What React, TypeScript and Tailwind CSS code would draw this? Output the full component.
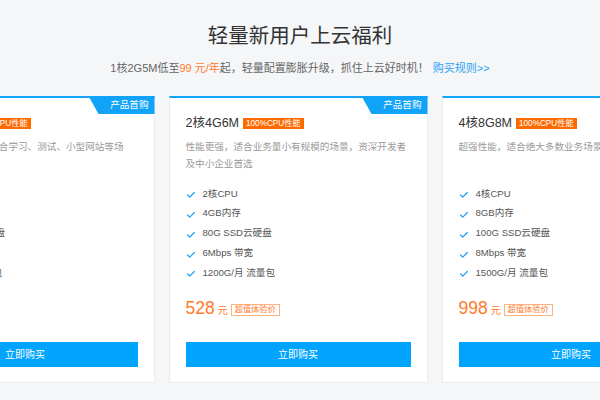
import { Check } from "lucide-react";

const plans = [
  {
    name: "1核2G5M",
    desc: "入门级性能配置，适合学习、测试、小型网站等场景，个人开发者首选",
    features: ["1核CPU", "2GB内存", "40GB SSD云硬盘", "5Mbps 带宽", "1000G/月 流量包"],
    price: "99",
  },
  {
    name: "2核4G6M",
    desc: "性能更强，适合业务量小有规模的场景，资深开发者及中小企业首选",
    features: ["2核CPU", "4GB内存", "80G SSD云硬盘", "6Mbps 带宽", "1200G/月 流量包"],
    price: "528",
  },
  {
    name: "4核8G8M",
    desc: "超强性能，适合绝大多数业务场景，中大型企业首选",
    features: ["4核CPU", "8GB内存", "100G SSD云硬盘", "8Mbps 带宽", "1500G/月 流量包"],
    price: "998",
  },
];

function PlanCard({ plan }: { plan: (typeof plans)[number] }) {
  return (
    <div className="relative w-[259px] shrink-0 bg-white border border-[#e9ebee] border-t-2 border-t-[#11a3f7] px-[16px] pt-[16px] pb-[15px]">
      {/* corner tag */}
      <div className="absolute -top-[2px] -right-px w-[66px] h-[18px] bg-[#11a3f7] [clip-path:polygon(0_0,100%_0,100%_100%,10px_100%)] flex items-center justify-end pr-[6px]">
        <span className="text-[9.6px] leading-none text-white">产品首购</span>
      </div>

      <div className="flex items-center gap-[4px] h-[18px]">
        <span className="text-[12.5px] text-[#333]">{plan.name}</span>
        <span className="h-[11px] px-[3px] bg-[#ff6a00] text-white text-[8.2px] leading-[11px]">100%CPU性能</span>
      </div>

      <p className="mt-[6px] h-[34px] text-[9.6px] leading-[17px] text-[#9a9a9a]">{plan.desc}</p>

      <ul className="mt-[12px]">
        {plan.features.map((f) => (
          <li key={f} className="flex items-center h-[19.75px] text-[9.6px] text-[#555]">
            <Check className="w-[10px] h-[10px] mr-[7px] mt-[3px] text-[#1ba1f5]" strokeWidth={3} />
            {f}
          </li>
        ))}
      </ul>

      <div className="mt-[14px] h-[24px] flex items-center">
        <span className="text-[17.5px] text-[#ff7a2a] leading-none">{plan.price}</span>
        <span className="ml-[3px] mt-[3px] text-[10px] text-[#ff7a2a]">元</span>
        <span className="ml-[3px] mt-[3px] h-[12px] px-[3px] border border-[#ffb27c] text-[8.2px] leading-[10px] text-[#ff7a2a]">超值体验价</span>
      </div>

      <button className="mt-[21px] w-full h-[25px] bg-[#00a4ff] text-white text-[10px] flex items-center justify-center">
        立即购买
      </button>
    </div>
  );
}

export default function App() {
  return (
    <div
      className="w-[600px] h-[400px] overflow-hidden bg-[#f5f6f8] flex flex-col items-center"
      style={{ fontFamily: '"Liberation Sans", "Noto Sans CJK SC", sans-serif' }}
    >
      <h1 className="mt-[22px] text-[20.5px] leading-[28px] text-[#333]">轻量新用户上云福利</h1>
      <p className="mt-[10px] text-[11px] leading-[16px] text-[#666]">
        1核2G5M低至<span className="text-[#ff7a2a]">99 元/年</span>起，轻量配置膨胀升级，抓住上云好时机！
        <span className="ml-[4px] text-[#2ea1f5]">购买规则&gt;&gt;</span>
      </p>

      <div className="mt-[20px] w-full flex justify-center gap-[14px] pr-[4px]">
        {plans.map((p) => (
          <PlanCard key={p.name} plan={p} />
        ))}
      </div>
    </div>
  );
}
